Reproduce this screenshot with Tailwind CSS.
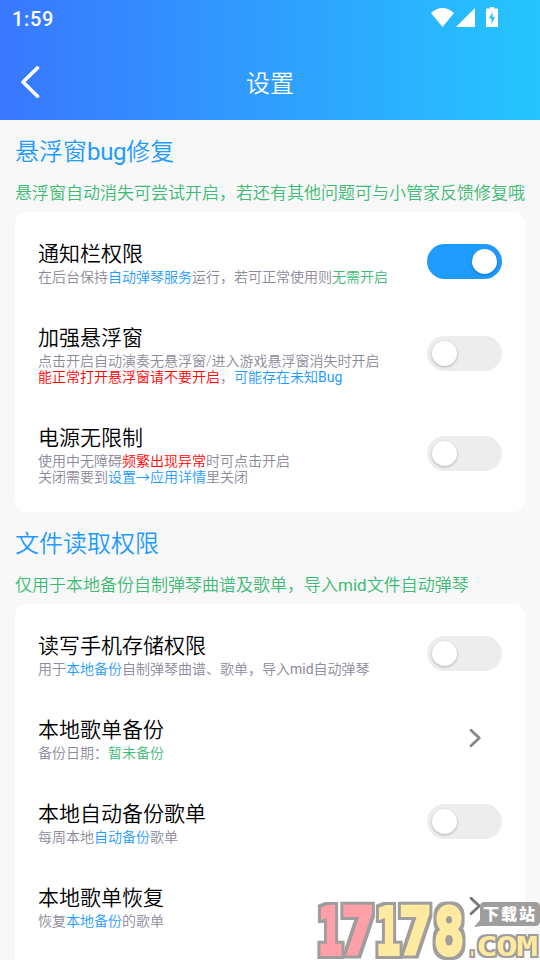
<!DOCTYPE html>
<html lang="zh-CN">
<head>
<meta charset="utf-8">
<title>设置</title>
<script src="https://cdn.jsdelivr.net/npm/@tailwindcss/browser@4"></script>
</head>
<body class="relative h-[960px] w-[540px] overflow-hidden bg-[#f8f8f8] font-[Roboto,'Noto_Sans_CJK_SC',sans-serif] font-[350] text-black">
<header class="flex h-[120px] flex-col bg-linear-to-r/srgb from-[#3977ff] to-[#25c5ff] text-white">
  <div class="flex h-9 items-center justify-between pr-[42px] pl-3">
    <span class="pt-[2px] text-[20px] leading-6 font-medium tracking-[0.7px]">1:59</span>
    <svg class="h-[22px] w-[68px]" viewBox="0 0 68 22" fill="currentColor">
      <path d="M1 6Q12.500 -4 24 6L12.500 20Z"/>
      <path d="M45 1V20H26Z"/>
      <path fill-rule="evenodd" d="M60 0h4v1.500h3q1 0 1 1V19q0 1 -1 1h-10q-1 0 -1 -1V2.500q0 -1 1 -1H60ZM62.500 5L59 11.500h2.500V17L65 10h-2.500Z"/>
    </svg>
  </div>
  <div class="grid h-[84px] grid-cols-[1fr_auto_1fr] items-center pt-2">
    <svg class="ml-5 h-8 w-5" viewBox="0 0 20 32" fill="none" stroke="currentColor" stroke-width="3.600" stroke-linecap="round" stroke-linejoin="round"><path d="M17.500 1.900L3 16L17.500 30.200"/></svg>
    <h1 class="pt-1 text-[24px] leading-9">设置</h1>
  </div>
</header>
<main>
  <section>
    <div class="flex h-[92px] flex-col px-[15px] pt-[14px]">
      <h2 class="text-[24px] leading-9 text-[#1f9bff]">悬浮窗<span class="font-normal tracking-[-0.3px]">bug</span>修复</h2>
      <p class="pt-[11px] text-[17px] leading-6 whitespace-nowrap text-[#3dba74]">悬浮窗自动消失可尝试开启，若还有其他问题可与小管家反馈修复哦</p>
    </div>
    <div class="mx-[15px] rounded-xl bg-white px-[23px] py-2">
      <div class="flex h-[84px] items-center justify-between">
        <div><h3 class="pt-px text-[21px] leading-7">通知栏权限</h3><p class="pt-px text-[14px] leading-4 text-[#8c8a9b]">在后台保持<span class="text-[#1f9bff]">自动弹琴服务</span>运行，若可正常使用则<span class="text-[#3dba74]">无需开启</span></p></div>
        <div class="mb-[2px] flex h-[35px] w-[75px] items-center justify-end rounded-full bg-[#1f9bff] px-[5px]"><i class="size-[25px] rounded-full bg-white shadow-[0_1px_3px_#0004]"></i></div>
      </div>
      <div class="flex h-[100px] items-center justify-between">
        <div><h3 class="pt-px text-[21px] leading-7">加强悬浮窗</h3><p class="pt-px text-[14px] leading-4 text-[#8c8a9b]">点击开启自动演奏无悬浮窗/进入游戏悬浮窗消失时开启<br><span class="text-[#ff0000]">能正常打开悬浮窗请不要开启</span>，<span class="text-[#1f9bff]">可能存在未知<span class="font-normal">Bug</span></span></p></div>
        <div class="mb-[2px] flex h-[35px] w-[75px] items-center rounded-full bg-[#ededed] px-[5px]"><i class="size-[25px] rounded-full bg-white shadow-[0_1px_3px_#0004]"></i></div>
      </div>
      <div class="flex h-[100px] items-center justify-between">
        <div><h3 class="pt-px text-[21px] leading-7">电源无限制</h3><p class="pt-px text-[14px] leading-4 text-[#8c8a9b]">使用中无障碍<span class="text-[#ff0000]">频繁出现异常</span>时可点击开启<br>关闭需要到<span class="text-[#1f9bff]">设置→应用详情</span>里关闭</p></div>
        <div class="mb-[2px] flex h-[35px] w-[75px] items-center rounded-full bg-[#ededed] px-[5px]"><i class="size-[25px] rounded-full bg-white shadow-[0_1px_3px_#0004]"></i></div>
      </div>
    </div>
  </section>
  <section>
    <div class="flex h-[92px] flex-col px-[15px] pt-[14px]">
      <h2 class="text-[24px] leading-9 text-[#1f9bff]">文件读取权限</h2>
      <p class="pt-[11px] text-[17px] leading-6 whitespace-nowrap text-[#3dba74]">仅用于本地备份自制弹琴曲谱及歌单，导入<span class="font-normal">mid</span>文件自动弹琴</p>
    </div>
    <div class="mx-[15px] h-[400px] rounded-xl bg-white px-[23px] py-2">
      <div class="flex h-[84px] items-center justify-between">
        <div><h3 class="pt-px text-[21px] leading-7">读写手机存储权限</h3><p class="pt-px text-[14px] leading-4 text-[#8c8a9b]">用于<span class="text-[#1f9bff]">本地备份</span>自制弹琴曲谱、歌单，导入<span class="font-normal">mid</span>自动弹琴</p></div>
        <div class="mb-[2px] flex h-[35px] w-[75px] items-center rounded-full bg-[#ededed] px-[5px]"><i class="size-[25px] rounded-full bg-white shadow-[0_1px_3px_#0004]"></i></div>
      </div>
      <div class="flex h-[84px] items-center justify-between">
        <div><h3 class="pt-px text-[21px] leading-7">本地歌单备份</h3><p class="pt-px text-[14px] leading-4 text-[#8c8a9b]">备份日期：<span class="text-[#3dba74]">暂未备份</span></p></div>
        <svg class="mr-5 h-5 w-[14px]" viewBox="0 0 14 20" fill="none" stroke="#888" stroke-width="2.800" stroke-linecap="round" stroke-linejoin="round"><path d="M3 2.200L11.300 10L3 17.800"/></svg>
      </div>
      <div class="flex h-[84px] items-center justify-between">
        <div><h3 class="pt-px text-[21px] leading-7">本地自动备份歌单</h3><p class="pt-px text-[14px] leading-4 text-[#8c8a9b]">每周本地<span class="text-[#1f9bff]">自动备份</span>歌单</p></div>
        <div class="mb-[2px] flex h-[35px] w-[75px] items-center rounded-full bg-[#ededed] px-[5px]"><i class="size-[25px] rounded-full bg-white shadow-[0_1px_3px_#0004]"></i></div>
      </div>
      <div class="flex h-[84px] items-center justify-between">
        <div><h3 class="pt-px text-[21px] leading-7">本地歌单恢复</h3><p class="pt-px text-[14px] leading-4 text-[#8c8a9b]">恢复<span class="text-[#1f9bff]">本地备份</span>的歌单</p></div>
        <svg class="mr-5 h-5 w-[14px]" viewBox="0 0 14 20" fill="none" stroke="#777" stroke-width="2.800" stroke-linecap="round" stroke-linejoin="round"><path d="M3 2.200L11.300 10L3 17.800"/></svg>
      </div>
    </div>
  </section>
</main>
<svg class="absolute top-[896px] left-[314px] h-16 w-[226px]" viewBox="0 0 226 64">
  <defs>
    <filter id="outline" x="-10" y="-10" width="250" height="90" filterUnits="userSpaceOnUse" color-interpolation-filters="sRGB">
      <feMorphology in="SourceAlpha" operator="dilate" radius="2.500" result="grown"/>
      <feFlood flood-color="#a09d9d"/>
      <feComposite in2="grown" operator="in" result="edge"/>
      <feMerge><feMergeNode in="edge"/><feMergeNode in="SourceGraphic"/></feMerge>
    </filter>
    <filter id="thin" x="-10" y="-10" width="250" height="90" filterUnits="userSpaceOnUse" color-interpolation-filters="sRGB">
      <feMorphology in="SourceAlpha" operator="dilate" radius="2" result="grown"/>
      <feFlood flood-color="#a09d9d"/>
      <feComposite in2="grown" operator="in" result="edge"/>
      <feMerge><feMergeNode in="edge"/><feMergeNode in="SourceGraphic"/></feMerge>
    </filter>
  </defs>
  <g filter="url(#outline)" font-family="DejaVu Sans Mono" font-weight="700" font-size="64" stroke-width="4" stroke-linejoin="miter">
    <g fill="#ffa0a8" stroke="#ffa0a8"><text transform="translate(4 58) scale(.63 1)">1</text><text transform="translate(27.500 58) scale(.85 1)">7</text></g>
    <g fill="#ffeaa0" stroke="#ffeaa0"><text transform="translate(62 58) scale(.63 1)">1</text><text transform="translate(85 58) scale(.85 1)">7</text><text transform="translate(120 58) scale(.78 1)">8</text></g>
  </g>
  <path fill="#a09d9d" d="M170 6H221Q226 6 226 11V25Q226 30 221 30H168L160 31L166 24V11Q166 6 170 6Z"/>
  <text x="169" y="24" fill="#fff" font-family="Noto Sans CJK SC" font-weight="900" font-size="16" textLength="52">下载站</text>
  <g filter="url(#thin)" fill="#ffeaa0" font-family="DejaVu Sans Mono" font-weight="700" font-size="27">
    <text transform="translate(155 60) scale(.400 1)">.</text>
    <text transform="translate(162 60) scale(1.350 1)" textLength="46">COM</text>
  </g>
</svg>
</body>
</html>
